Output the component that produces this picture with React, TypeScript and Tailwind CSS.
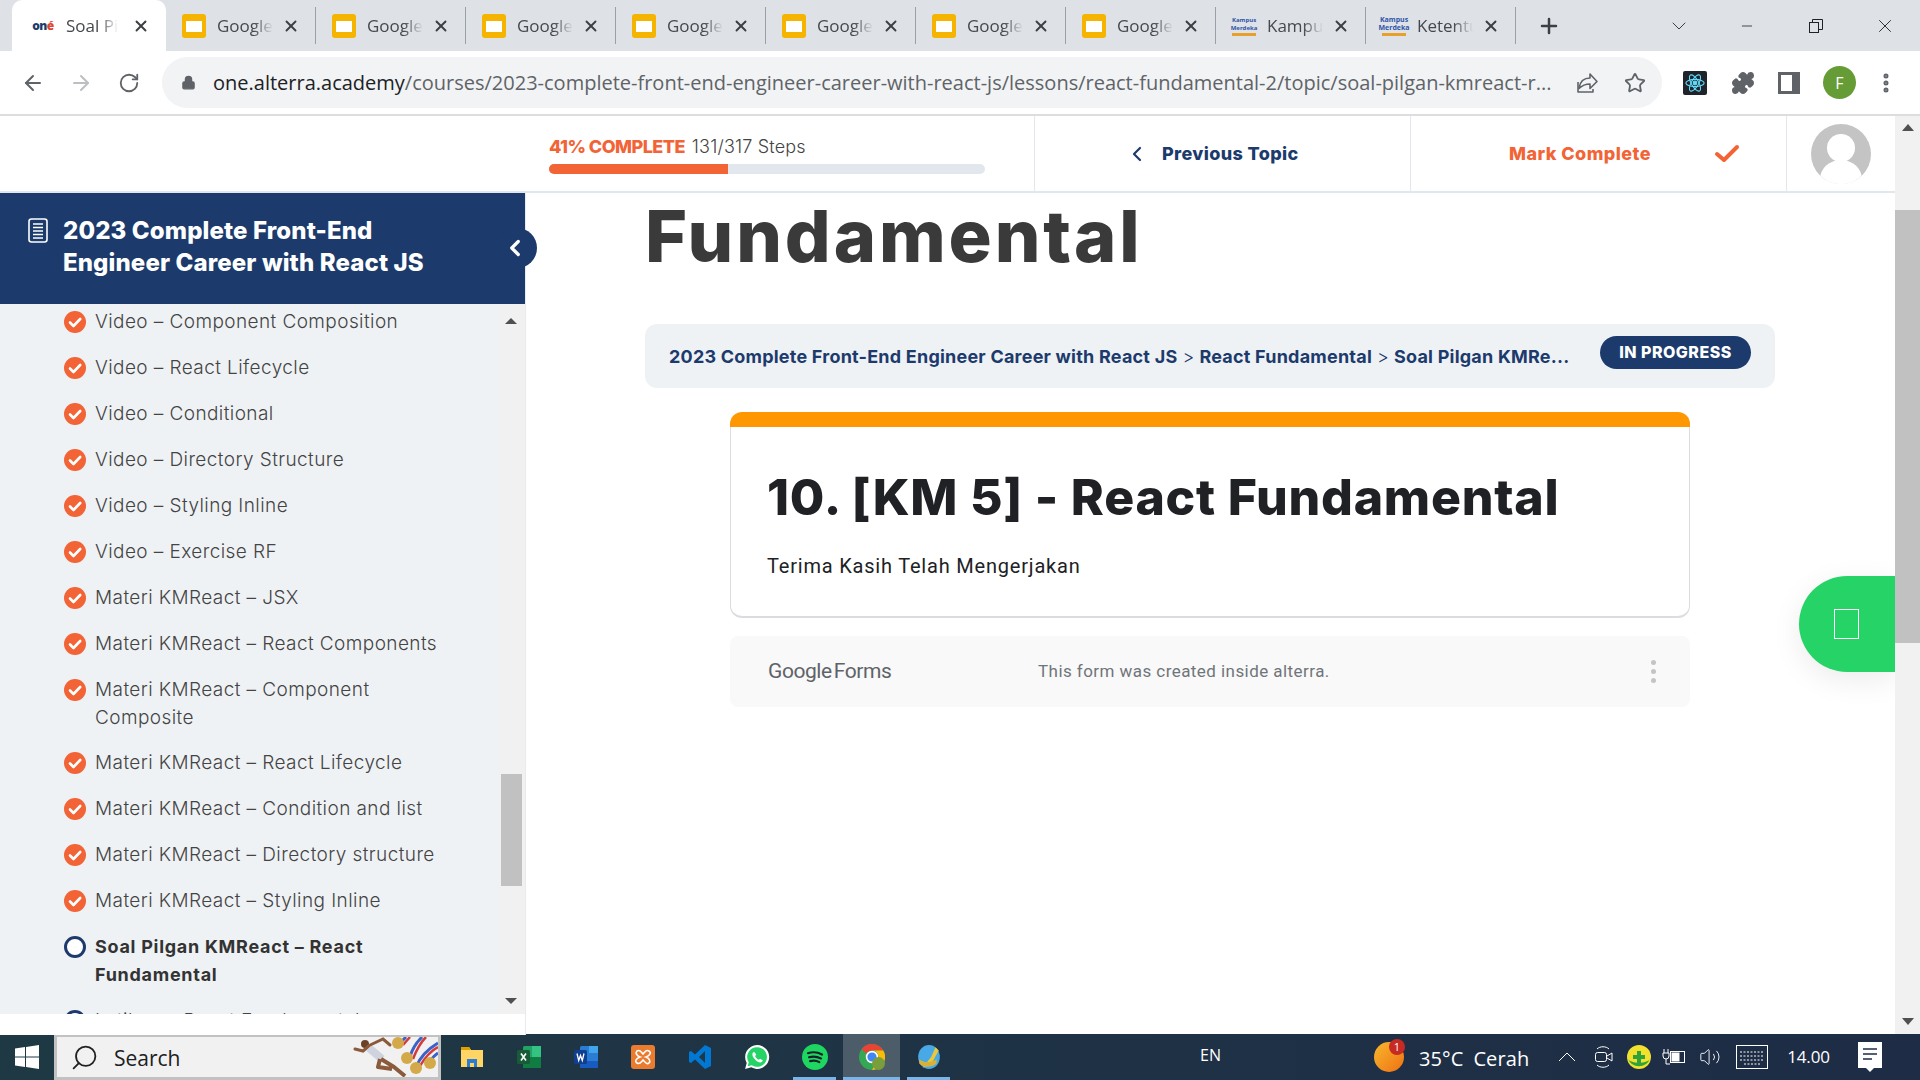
import React from "react";
import { ArrowLeft, ArrowRight, RotateCw, Lock, Star, Puzzle, MoreVertical, Plus, X, ChevronDown, Minus, ChevronLeft, Search, Volume2 } from "lucide-react";

const SANS = "font-['Inter','Liberation_Sans',sans-serif]";
const UI = "font-['Open_Sans','Liberation_Sans',sans-serif]";

function SlidesIcon() {
  return (
    <svg width="24" height="24" viewBox="0 0 24 24" className="shrink-0">
      <rect x="0" y="0" width="24" height="24" rx="3" fill="#f4b400" />
      <rect x="4" y="7" width="16" height="11" fill="#fff" />
    </svg>
  );
}

function OneIcon() {
  return <span className="w-[24px] shrink-0 text-center text-[12px] font-extrabold leading-none tracking-tighter text-[#1c3b6c]">on<span className="text-[#e0452c]">é</span></span>;
}

function KampusIcon({ tall }: { tall?: boolean }) {
  return (
    <span className={`flex w-[24px] shrink-0 flex-col items-center justify-center text-center font-bold leading-[8px] text-[#2d55a8] ${tall ? "h-[30px] text-[7px]" : "h-[24px] text-[6px]"}`}>
      <span>Kampus</span>
      <span>Merdeka</span>
      <span className="mt-[1px] h-[3px] w-full bg-[#e8a02c]" />
    </span>
  );
}

const tabs = [
  { icon: <SlidesIcon />, text: "Google" },
  { icon: <SlidesIcon />, text: "Google" },
  { icon: <SlidesIcon />, text: "Google" },
  { icon: <SlidesIcon />, text: "Google" },
  { icon: <SlidesIcon />, text: "Google" },
  { icon: <SlidesIcon />, text: "Google" },
  { icon: <SlidesIcon />, text: "Google" },
  { icon: <KampusIcon />, text: "Kampus" },
  { icon: <KampusIcon tall />, text: "Ketentuan" },
];

function Tab({ icon, text }: { icon: React.ReactNode; text: string }) {
  return (
    <div className="flex h-[37px] w-[150px] shrink-0 items-center border-r border-[#9aa0a6] pl-[16px] pr-[15px]">
      {icon}
      <span className="ml-[11px] w-[56px] overflow-hidden whitespace-nowrap text-[17px] text-[#45494d] [mask-image:linear-gradient(to_right,black_65%,transparent)]">{text}</span>
      <X size={18} strokeWidth={2.5} className="ml-auto text-[#3c4043]" />
    </div>
  );
}

function Tabs() {
  return (
    <div className={`flex h-[51px] shrink-0 items-center bg-[#dee1e6] pl-[12px] ${UI}`}>
      <div className="flex h-[51px] w-[154px] shrink-0 items-center self-end rounded-t-[10px] bg-white pl-[19px] pr-[16px]">
        <OneIcon />
        <span className="ml-[11px] w-[52px] overflow-hidden whitespace-nowrap text-[17px] text-[#45494d] [mask-image:linear-gradient(to_right,black_65%,transparent)]">Soal Pilgan</span>
        <X size={18} strokeWidth={2.5} className="ml-auto text-[#3c4043]" />
      </div>
      <div className="flex items-center">
        {tabs.map((t, i) => (
          <Tab key={i} icon={t.icon} text={t.text} />
        ))}
      </div>
      <Plus size={24} strokeWidth={2.5} className="ml-[21px] text-[#3c4043]" />
      <ChevronDown size={24} strokeWidth={1} className="ml-[106px] text-[#3c4043]" />
      <Minus size={16} strokeWidth={1.2} className="ml-[48px] text-[#202124]" />
      <svg width="16" height="16" viewBox="0 0 16 16" className="ml-[53px]" fill="none" stroke="#202124" strokeWidth="1">
        <rect x="1.5" y="4.5" width="9" height="10" />
        <path d="M4.5 4.5v-3h10v10h-4" />
      </svg>
      <X size={22} strokeWidth={1} className="ml-[50px] text-[#202124]" />
    </div>
  );
}

function Toolbar() {
  return (
    <div className={`flex h-[65px] shrink-0 items-center border-b-2 border-[#dddddd] bg-white pl-[21px] ${UI}`}>
      <ArrowLeft size={24} strokeWidth={2} className="text-[#5f6368]" />
      <ArrowRight size={24} strokeWidth={2} className="ml-[24px] text-[#bcbfc3]" />
      <RotateCw size={22} strokeWidth={2} className="ml-[25px] text-[#5f6368]" />
      <div className="ml-[22px] flex h-[51px] w-[1500px] items-center rounded-full bg-[#f1f3f4] pl-[19px]">
        <Lock size={15} fill="#5f6368" className="text-[#5f6368]" />
        <div className="ml-[17px] w-[1346px] overflow-hidden whitespace-nowrap text-[20px] text-[#5f6368]">
          <span className="text-[#202124]">one.alterra.academy</span>/courses/2023-complete-front-end-engineer-career-with-react-js/lessons/react-fundamental-2/topic/soal-pilgan-kmreact-r...
        </div>
        <svg width="24" height="24" viewBox="0 0 24 24" fill="none" stroke="#5f6368" strokeWidth="1.6" strokeLinejoin="round" className="ml-[16px]">
          <path d="M3 11v10h15v-3" />
          <path d="M4 17c1-6 5-10 11-10V3l7 7.500-7 7v-4.500c-5 0-8 1.500-11 4.500z" />
        </svg>
        <Star size={22} strokeWidth={2} className="ml-[25px] text-[#5f6368]" />
      </div>
      <div className="ml-[21px] flex h-[24px] w-[24px] items-center justify-center rounded-[2px] bg-[#20232a]">
        <svg width="22" height="22" viewBox="0 0 24 24" fill="none" stroke="#61dafb" strokeWidth="1.2">
          <circle cx="12" cy="12" r="2" fill="#61dafb" />
          <ellipse cx="12" cy="12" rx="10" ry="4" />
          <ellipse cx="12" cy="12" rx="10" ry="4" transform="rotate(60 12 12)" />
          <ellipse cx="12" cy="12" rx="10" ry="4" transform="rotate(120 12 12)" />
        </svg>
      </div>
      <Puzzle size={24} fill="#5f6368" className="ml-[24px] text-[#5f6368]" />
      <svg width="22" height="22" viewBox="0 0 22 22" className="ml-[23px]">
        <path d="M0 0h22v22H0z M3 3v16h11V3z" fill="#5f6368" fillRule="evenodd" />
      </svg>
      <div className="ml-[23px] flex h-[33px] w-[33px] items-center justify-center rounded-full bg-[#659c35] text-[16px] text-white">F</div>
      <MoreVertical size={24} strokeWidth={3} className="ml-[18px] text-[#5f6368]" />
    </div>
  );
}

function TopHeader() {
  return (
    <div className={`flex h-[77px] shrink-0 border-b-2 border-[#e2e7ed] bg-white pl-[549px] ${SANS}`}>
      <div className="w-[436px] pt-[18px]">
        <div className="flex items-center text-[18px] leading-[26px]">
          <span className="font-extrabold tracking-[-0.03em] text-[#f26336]">41% COMPLETE</span>
          <span className="ml-[7px] font-light tracking-[0.01em] text-[#444444]">131/317 Steps</span>
        </div>
        <div className="mt-[4px] h-[10px] w-full overflow-hidden rounded-full bg-[#e2e7ed]">
          <div className="h-full w-[179px] bg-[#f26336]" />
        </div>
      </div>
      <div className="ml-[49px] flex w-[376px] items-center border-l border-[#e2e7ed] pl-[90px] text-[18px] font-extrabold tracking-[0.02em] text-[#1c3b6c]">
        <ChevronLeft size={24} strokeWidth={2.2} />
        <span className="ml-[13px]">Previous Topic</span>
      </div>
      <div className="flex w-[376px] items-center border-l border-[#e2e7ed] pl-[98px] text-[18px] font-extrabold tracking-[0.025em] text-[#f26336]">
        <span className="w-[144px] whitespace-nowrap">Mark Complete</span>
        <svg width="26" height="20" viewBox="0 0 26 20" fill="none" stroke="#f26336" strokeWidth="4" strokeLinecap="round" strokeLinejoin="round" className="ml-[61px]">
          <path d="M3 10l7 6L23 3" />
        </svg>
      </div>
      <div className="flex flex-1 items-start border-l border-[#e2e7ed] pl-[24px] pt-[8px]">
        <svg width="60" height="60" viewBox="0 0 60 60">
          <defs>
            <clipPath id="av"><circle cx="30" cy="30" r="30" /></clipPath>
          </defs>
          <g clipPath="url(#av)">
            <rect width="60" height="60" fill="#c4c4c4" />
            <circle cx="30" cy="24" r="14" fill="#fff" />
            <ellipse cx="30" cy="55" rx="21" ry="19" fill="#fff" />
            <rect x="0" y="56" width="60" height="4" fill="#fff" />
          </g>
        </svg>
      </div>
    </div>
  );
}

const items: { t: React.ReactNode; done?: boolean; bold?: boolean; wrap?: boolean }[] = [
  { t: "Video – Component Composition", done: true },
  { t: "Video – React Lifecycle", done: true },
  { t: "Video – Conditional", done: true },
  { t: "Video – Directory Structure", done: true },
  { t: "Video – Styling Inline", done: true },
  { t: "Video – Exercise RF", done: true },
  { t: "Materi KMReact – JSX", done: true },
  { t: "Materi KMReact – React Components", done: true },
  { t: "Materi KMReact – Component Composite", done: true, wrap: true },
  { t: "Materi KMReact – React Lifecycle", done: true },
  { t: "Materi KMReact – Condition and list", done: true },
  { t: "Materi KMReact – Directory structure", done: true },
  { t: "Materi KMReact – Styling Inline", done: true },
  { t: "Soal Pilgan KMReact – React Fundamental", bold: true },
  { t: "Latihan – React Fundamental" },
];

function StepIcon({ done }: { done?: boolean }) {
  return done ? (
    <svg width="22" height="22" viewBox="0 0 22 22" className="mt-[3px] shrink-0">
      <circle cx="11" cy="11" r="11" fill="#f26336" />
      <path d="M6 11.500l3.500 3.500L16.200 8" fill="none" stroke="#fff" strokeWidth="2.6" strokeLinecap="round" strokeLinejoin="round" />
    </svg>
  ) : (
    <svg width="22" height="22" viewBox="0 0 22 22" className="mt-[3px] shrink-0">
      <circle cx="11" cy="11" r="9.500" fill="#fff" stroke="#1c3b6c" strokeWidth="3" />
    </svg>
  );
}

function Sidebar() {
  return (
    <div className={`relative z-10 flex h-[842px] w-[526px] shrink-0 flex-col border-r border-[#e8ebee] ${SANS}`}>
      <div className="flex h-[111px] w-[525px] shrink-0 bg-[#1c3b6c] pl-[28px] pt-[22px]">
        <svg width="20" height="25" viewBox="0 0 20 25" fill="none" stroke="#fff" className="mt-[3px] shrink-0">
          <rect x="1" y="1" width="18" height="23" rx="2.500" strokeWidth="1.6" />
          <path d="M5 6h10M5 9.500h10M5 13h10M5 16.500h10M5 20h10" strokeWidth="1.4" />
        </svg>
        <div className="ml-[15px] w-[400px] text-[24px] font-extrabold leading-[32px] tracking-[0.005em] text-white">
          2023 Complete Front-End Engineer Career with React JS
        </div>
      </div>
      <div className="absolute left-[497px] top-[35px] flex h-[40px] w-[40px] items-center justify-center rounded-full bg-[#1c3b6c]">
        <ChevronLeft size={26} strokeWidth={3} className="-ml-[4px] text-white" />
      </div>
      <div className="flex h-[710px] shrink-0">
        <div className="h-full w-[499px] overflow-hidden bg-[#eff2f5] pl-[64px]">
          <div className="-mt-[5px]">
            {items.map((it, i) => (
              <div key={i} className={`flex gap-[9px] pt-[9px] ${it.wrap ? "pb-[8px]" : "pb-[9px]"}`}>
                <StepIcon done={it.done} />
                <div className={`w-[360px] leading-[28px] ${it.bold ? "text-[18px] font-bold tracking-[0.04em] text-[#333333]" : "text-[19px] font-light tracking-[0.022em] text-[#444444]"}`}>{it.t}</div>
              </div>
            ))}
          </div>
        </div>
        <div className="flex h-full w-[26px] flex-col items-center bg-[#f1f1f1] pr-[2px] pt-[14px]">
          <div className="h-0 w-0 border-x-[6px] border-b-[6px] border-x-transparent border-b-[#505050]" />
          <div className="mt-[450px] h-[112px] w-[21px] bg-[#c1c1c1]" />
          <div className="mt-[112px] h-0 w-0 border-x-[6px] border-t-[6px] border-x-transparent border-t-[#505050]" />
        </div>
      </div>
      <div className="flex-1 bg-white" />
    </div>
  );
}

function Main() {
  return (
    <div className={`relative flex-1 overflow-hidden bg-white ${SANS}`}>
      <div className="pl-[119px] text-[72px] font-extrabold leading-[86px] tracking-[0.04em] text-[#3a3a3a]">Fundamental</div>
      <div className="ml-[119px] mt-[45px] flex h-[64px] w-[1130px] items-center rounded-[12px] bg-[#eff2f5] pl-[24px] text-[#1c3b6c]">
        <div className="flex w-[906px] items-center whitespace-nowrap text-[18px] font-bold tracking-[0.012em]">
          <span>2023 Complete Front-End Engineer Career with React JS</span>
          <span className="mx-[5px] font-light">&gt;</span>
          <span>React Fundamental</span>
          <span className="mx-[5px] font-light">&gt;</span>
          <span>Soal Pilgan KMRe...</span>
        </div>
        <div className="-mt-[8px] ml-[25px] flex h-[33px] w-[151px] items-center justify-center rounded-full bg-[#1c3b6c] text-[16px] font-extrabold tracking-[0.03em] text-white">IN PROGRESS</div>
      </div>
      <div className="ml-[204px] mt-[24px] w-[960px]">
        <div className="h-[15px] rounded-t-[12px] bg-[#ff9800]" />
        <div className="h-[191px] rounded-b-[12px] border border-t-0 border-b-2 border-[#dadce0] bg-white pl-[36px] pt-[40px]">
          <div className="text-[50px] font-extrabold leading-[60px] tracking-[0.015em] text-[#202124]">10. [KM 5] - React Fundamental</div>
          <div className="mt-[24px] font-['Roboto',sans-serif] text-[20px] leading-[30px] tracking-[0.04em] text-[#202124]">Terima Kasih Telah Mengerjakan</div>
        </div>
        <div className="mt-[18px] flex h-[71px] items-center rounded-[8px] bg-[#f9f9f9] pl-[38px] font-['Roboto',sans-serif]">
          <span className="w-[270px] text-[21px] tracking-[-0.02em] text-[#5f6368]">Google<span className="ml-[2px]">Forms</span></span>
          <span className="text-[17px] tracking-[0.026em] text-[#70757a]">This form was created inside alterra.</span>
          <span className="ml-auto mr-[34px] flex flex-col gap-[4px]">
            <span className="h-[5px] w-[5px] rounded-full bg-[#c4c4c4]" />
            <span className="h-[5px] w-[5px] rounded-full bg-[#c4c4c4]" />
            <span className="h-[5px] w-[5px] rounded-full bg-[#c4c4c4]" />
          </span>
        </div>
      </div>
      <div className="absolute right-0 top-[383px] flex h-[96px] w-[96px] items-center justify-center rounded-l-[48px] bg-[#25d366] shadow-[0_8px_30px_rgba(0,0,0,0.08)]">
        <div className="-ml-[2px] h-[30px] w-[25px] border border-white" />
      </div>
    </div>
  );
}

function PageScrollbar() {
  return (
    <div className="flex w-[25px] shrink-0 flex-col items-center bg-[#f1f1f1] pt-[8px]">
      <div className="h-0 w-0 border-x-[6px] border-b-[7px] border-x-transparent border-b-[#505050]" />
      <div className="mt-[79px] h-[433px] w-full shrink-0 bg-[#c1c1c1]" />
      <div className="mt-[375px] h-0 w-0 border-x-[6px] border-t-[7px] border-x-transparent border-t-[#505050]" />
    </div>
  );
}

function Taskbar() {
  return (
    <div className={`flex h-[46px] shrink-0 items-center bg-gradient-to-r from-[#1f3944] to-[#1e2c46] text-white ${UI}`}>
      <svg width="24" height="24" viewBox="0 0 24 24" className="ml-[15px]" fill="#fff">
        <path d="M0 3.400L10 2v9.400H0zM11 1.900L24 0v11.400H11zM0 12.400h10v9.500l-10-1.400zM11 12.400h13V24l-13-1.900z" />
      </svg>
      <div className="ml-[15px] flex h-[46px] w-[387px] items-center justify-between border-[3px] border-[#c2c2c2] bg-[#f1f1f1] pl-[13px] text-[#202020]">
        <div className="flex items-center">
          <Search size={29} strokeWidth={1.5} className="-scale-x-100" />
          <span className="ml-[15px] mt-[3px] text-[21px]">Search</span>
        </div>
        <svg width="88" height="40" viewBox="0 0 88 40">
          <path d="M50 6L56 0M60 20C62 12 66 6 72 0M66 30C70 20 78 12 88 6M80 24C83 20 85 18 88 16" fill="none" stroke="#3a62c8" strokeWidth="3" />
          <path d="M53 8L60 0M63 22C66 14 70 6 76 0M70 29C74 22 80 14 88 10" fill="none" stroke="#d33c3c" strokeWidth="2.500" />
          <circle cx="15" cy="7" r="4" fill="#6b4228" />
          <path d="M5 12L13 14L19 9" fill="none" stroke="#8a5a3a" strokeWidth="3" strokeLinecap="round" />
          <path d="M19 11L32 22" fill="none" stroke="#cfd3de" strokeWidth="8" />
          <path d="M18 9L33 2L40 8" fill="none" stroke="#8a5a3a" strokeWidth="3" strokeLinecap="round" />
          <path d="M30 22L28 30L42 32M31 22L44 30L55 39" fill="none" stroke="#8a5a3a" strokeWidth="4" strokeLinejoin="round" />
          <circle cx="48" cy="6" r="6" fill="#d4a949" />
          <circle cx="57" cy="21" r="6" fill="#d4a949" />
          <circle cx="66" cy="31" r="6" fill="#d4a949" />
          <circle cx="80" cy="26" r="6" fill="#d4a949" />
        </svg>
      </div>
      <div className="flex items-center">
        <TaskIcon w={57} ml={2}>
          <svg width="24" height="24" viewBox="0 0 24 24">
            <path d="M1 2h8l2 3h12v17H1z" fill="#ffd566" />
            <path d="M1 2h8l2 3H1z" fill="#e0a100" />
            <path d="M7 14h10v8h-3v-4h-4v4H7z" fill="#2b7cd3" />
          </svg>
        </TaskIcon>
        <TaskIcon w={57}>
          <svg width="24" height="24" viewBox="0 0 24 24">
            <rect x="6" y="1" width="18" height="22" rx="1.500" fill="#21a366" />
            <rect x="15" y="1" width="9" height="11" fill="#33c481" />
            <rect x="6" y="12" width="18" height="11" fill="#107c41" />
            <rect x="0" y="5" width="13" height="14" rx="1.500" fill="#185c37" />
            <path d="M4 8.500l5 7M9 8.500l-5 7" stroke="#fff" strokeWidth="1.6" />
          </svg>
        </TaskIcon>
        <TaskIcon w={57}>
          <svg width="24" height="24" viewBox="0 0 24 24">
            <rect x="6" y="1" width="18" height="22" rx="1.500" fill="#2b7cd3" />
            <rect x="15" y="1" width="9" height="7" fill="#41a5ee" />
            <rect x="6" y="16" width="18" height="7" fill="#185abd" />
            <rect x="0" y="5" width="13" height="14" rx="1.500" fill="#103f91" />
            <path d="M3 8.500l1.700 7 1.800-5 1.800 5 1.700-7" fill="none" stroke="#fff" strokeWidth="1.3" />
          </svg>
        </TaskIcon>
        <TaskIcon w={57}>
          <svg width="24" height="24" viewBox="0 0 24 24">
            <rect width="24" height="24" rx="3" fill="#ea7c30" />
            <path d="M6 6c3-2 4 1 6 3 2-2 3-5 6-3s0 5-3 6c3 1 5 4 3 6s-4-1-6-3c-2 2-3 5-6 3s0-5 3-6c-3-1-5-4-3-6z" fill="none" stroke="#fff" strokeWidth="1.6" />
          </svg>
        </TaskIcon>
        <TaskIcon w={57}>
          <svg width="24" height="24" viewBox="0 0 24 24">
            <path d="M17 0l6 3v18l-6 3L7 14.500 3 18l-2-1V7l2-1 4 3.500z" fill="#0078d4" />
            <path d="M17 6l-6 6 6 6z" fill="#1f3944" />
          </svg>
        </TaskIcon>
        <TaskIcon w={58}>
          <svg width="26" height="26" viewBox="0 0 24 24">
            <path d="M12 1a11 11 0 00-9.500 16.500L1 23l5.700-1.500A11 11 0 1012 1z" fill="#fff" />
            <path d="M12 3a9 9 0 00-7.600 13.800l-1 3.700 3.800-1A9 9 0 1012 3z" fill="#25d366" />
            <path d="M8.500 7.500c-1 1-1.200 3 .5 5.500s4 4 5.800 4c1.500 0 2.500-1 2.500-2l-2.500-1.500-1 1c-1.500-.5-3-2-3.500-3.500l1-1-1.500-2.500z" fill="#fff" />
          </svg>
        </TaskIcon>
        <TaskIcon w={57} bar="left-[7px] right-[7px]">
          <svg width="26" height="26" viewBox="0 0 24 24">
            <circle cx="12" cy="12" r="12" fill="#1ed760" />
            <path d="M5.500 8.500c4-1.300 9-1 13 1.200M6.500 12.300c3.500-1 7.500-.7 11 1M7.500 15.800c3-.8 6-.5 8.500.9" fill="none" stroke="#17202a" strokeWidth="2" strokeLinecap="round" />
          </svg>
        </TaskIcon>
        <TaskIcon w={57} active bar="left-0 right-0">
          <svg width="26" height="26" viewBox="0 0 24 24">
            <circle cx="12" cy="12" r="12" fill="#34a853" />
            <path d="M12 0a12 12 0 0110.400 6H12a6 6 0 00-5.200 3L2.500 4.500A12 12 0 0112 0z" fill="#ea4335" />
            <path d="M22.400 6A12 12 0 0112 24l5.200-9A6 6 0 0012 6z" fill="#fbbc05" />
            <circle cx="12" cy="12" r="5" fill="#4285f4" stroke="#fff" strokeWidth="1.500" />
            <circle cx="18" cy="18" r="6" fill="#7a9e3b" />
          </svg>
        </TaskIcon>
        <TaskIcon w={57} bar="left-[7px] right-[7px]">
          <svg width="26" height="26" viewBox="0 0 24 24">
            <ellipse cx="12" cy="12" rx="10" ry="11" fill="#48a9e6" />
            <path d="M6 22l8-10 4-9 3 3-5 9-3 4z" fill="#e8c93a" />
            <path d="M3 14c4 3 9 4 16 0v4c-5 4-12 4-16 0z" fill="#d8b13a" />
          </svg>
        </TaskIcon>
      </div>
      <span className="ml-[243px] -mt-[4px] text-[16px]">EN</span>
      <div className="relative ml-[153px] h-[30px] w-[30px] rounded-full bg-gradient-to-br from-[#f5b72d] to-[#ef6f12]">
        <span className="absolute -right-[1px] -top-[3px] flex h-[16px] w-[16px] items-center justify-center rounded-full bg-[#c62a22] text-[11px]">1</span>
      </div>
      <span className="ml-[15px] mt-[3px] text-[20px] tracking-[0.005em]">35°C</span>
      <span className="ml-[10px] mt-[3px] text-[20px] tracking-[0.005em]">Cerah</span>
      <svg width="18" height="10" viewBox="0 0 18 10" fill="none" stroke="#fff" strokeWidth="1" className="ml-[29px]"><path d="M1 9l8-8 8 8" /></svg>
      <svg width="20" height="24" viewBox="0 0 20 24" fill="none" stroke="#fff" strokeWidth="1" className="ml-[18px]">
        <path d="M3 4C6 1 12 1 15 4M3 20C6 23 12 23 15 20" />
        <rect x="1.500" y="7.500" width="11" height="9" rx="2" />
        <path d="M13 11l5-3v8l-5-3" />
      </svg>
      <svg width="24" height="24" viewBox="0 0 24 24" className="ml-[13px]">
        <circle cx="12" cy="12" r="12" fill="#f2e02e" />
        <path d="M1 14a12 12 0 0022 0c-3 5-19 5-22 0z" fill="#2fa33a" />
        <path d="M10 6h4v4h4v4h-4v4h-4v-4H6v-4h4z" fill="#2fa33a" />
      </svg>
      <svg width="24" height="18" viewBox="0 0 24 18" className="ml-[11px]" fill="none" stroke="#fff">
        <path d="M2 1v4M6 1v4M1 5h6v3a3 3 0 01-6 0zM4 11v5h4" />
        <rect x="8.500" y="3.500" width="14" height="11" />
        <rect x="10" y="5" width="7" height="8" fill="#fff" />
      </svg>
      <Volume2 size={22} strokeWidth={1} className="ml-[13px]" />
      <svg width="32" height="24" viewBox="0 0 32 24" fill="none" stroke="#fff" className="ml-[15px]">
        <rect x=".5" y=".5" width="31" height="23" />
        <path d="M4 7h24M4 11h24M4 15h24M8 19h16" strokeDasharray="2 1.500" />
      </svg>
      <span className="ml-[19px] text-[17px] tracking-[-0.01em]">14.00</span>
      <svg width="24" height="35" viewBox="0 0 24 35" className="ml-[28px]">
        <path d="M0 2h24v26h-8l-4 4-4-4H0z" fill="#fff" />
        <path d="M5 9h14M5 14h14M5 19h9" stroke="#1e2c46" strokeWidth="1.500" />
      </svg>
    </div>
  );
}

function TaskIcon({ w, ml = 0, active, bar, children }: { w: number; ml?: number; active?: boolean; bar?: string; children: React.ReactNode }) {
  return (
    <div
      className={`relative flex h-[46px] shrink-0 items-center justify-center ${active ? "bg-[#4c5c68]" : ""}`}
      style={{ width: w, marginLeft: ml }}
    >
      {children}
      {bar ? <span className={`absolute bottom-0 h-[3px] bg-[#7ab4e8] ${bar}`} /> : null}
    </div>
  );
}

export default function App() {
  return (
    <div className="flex h-screen w-full flex-col overflow-hidden bg-white">
      <Tabs />
      <Toolbar />
      <div className="flex min-h-0 flex-1">
        <div className="flex min-w-0 flex-1 flex-col">
          <TopHeader />
          <div className="flex min-h-0 flex-1">
            <Sidebar />
            <Main />
          </div>
        </div>
        <PageScrollbar />
      </div>
      <Taskbar />
    </div>
  );
}
